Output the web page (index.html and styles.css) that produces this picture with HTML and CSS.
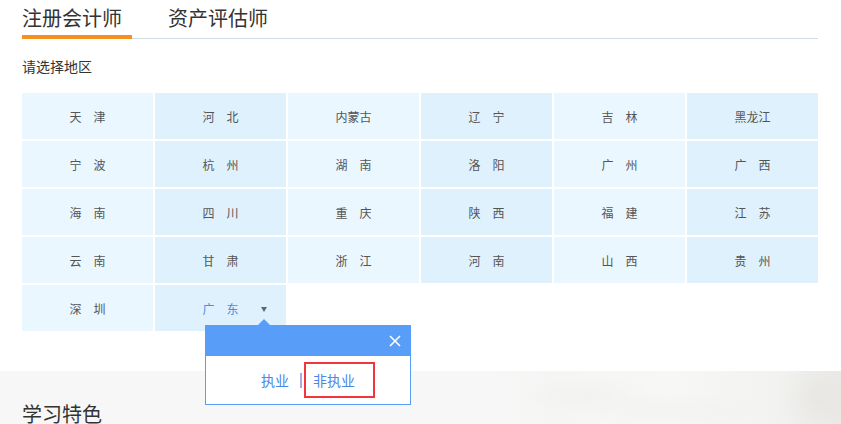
FILE: index.html
```html
<!DOCTYPE html>
<html lang="zh-CN">
<head>
<meta charset="utf-8">
<title>选择地区</title>
<link rel="stylesheet" href="styles.css">
</head>
<body>
<div class="main">
  <div class="tabs">
    <div class="tab active">注册会计师</div>
    <div class="tab">资产评估师</div>
  </div>
  <div class="title">请选择地区</div>
  <div class="grid">
    <div class="cell">天　津</div>
    <div class="cell">河　北</div>
    <div class="cell">内蒙古</div>
    <div class="cell">辽　宁</div>
    <div class="cell">吉　林</div>
    <div class="cell">黑龙江</div>
    <div class="cell">宁　波</div>
    <div class="cell">杭　州</div>
    <div class="cell">湖　南</div>
    <div class="cell">洛　阳</div>
    <div class="cell">广　州</div>
    <div class="cell">广　西</div>
    <div class="cell">海　南</div>
    <div class="cell">四　川</div>
    <div class="cell">重　庆</div>
    <div class="cell">陕　西</div>
    <div class="cell">福　建</div>
    <div class="cell">江　苏</div>
    <div class="cell">云　南</div>
    <div class="cell">甘　肃</div>
    <div class="cell">浙　江</div>
    <div class="cell">河　南</div>
    <div class="cell">山　西</div>
    <div class="cell">贵　州</div>
    <div class="cell">深　圳</div>
    <div class="cell open">广　东<span class="drop"></span>
      <div class="popup">
        <div class="popup-head">
          <svg class="close" width="12" height="12" viewBox="0 0 12 12"><path d="M1 1 L11 11 M11 1 L1 11" stroke="#fff" stroke-width="1.6" fill="none"/></svg>
        </div>
        <div class="popup-body">
          <a class="opt">执业</a><span class="sep"></span><a class="opt marked">非执业</a>
        </div>
      </div>
    </div>
  </div>
</div>
<div class="feature">
  <h2 class="feature-title">学习特色</h2>
</div>
</body>
</html>
```
FILE: styles.css
```css
html, body {
  margin: 0;
  padding: 0;
  background: #fff;
  font-family: "Noto Sans CJK SC", "Noto Sans", sans-serif;
  color: #333;
}
.main {
  padding: 0 23px 0 22px;
}
.tabs {
  display: flex;
  height: 38px;
  border-bottom: 1px solid #d3d9e5;
}
.tab {
  font-size: 20px;
  line-height: 35px;
  color: #333;
  white-space: nowrap;
}
.tab.active {
  width: 110px;
  border-bottom: 4px solid #f6901e;
  margin-bottom: -1px;
}
.tab + .tab {
  margin-left: 36px;
}
.title {
  margin-top: 17px;
  font-size: 14px;
  line-height: 20px;
  color: #333;
}
.grid {
  margin-top: 17px;
  display: grid;
  grid-template-columns: repeat(6, 131px);
  grid-auto-rows: 46px;
  gap: 2px;
}
.cell {
  display: flex;
  align-items: center;
  justify-content: center;
  font-size: 12px;
  color: #555;
  background: #ebf7fe;
  position: relative;
}
.cell:nth-child(even) {
  background: #dff1fd;
}
.cell.open {
  color: #4a8de6;
}
.drop {
  position: absolute;
  left: 106px;
  top: 22px;
  width: 0;
  height: 0;
  border-top: 5px solid #666;
  border-left: 3.5px solid transparent;
  border-right: 3.5px solid transparent;
}
.popup {
  position: absolute;
  left: 50px;
  top: 40px;
  width: 204px;
  border: 1px solid #589df7;
  background: #fff;
  z-index: 5;
}
.popup::before {
  content: "";
  position: absolute;
  top: -7px;
  left: 52px;
  border-bottom: 6px solid #589df7;
  border-left: 6px solid transparent;
  border-right: 6px solid transparent;
}
.popup-head {
  height: 30px;
  background: #589df7;
  display: flex;
  align-items: center;
  justify-content: flex-end;
  padding-right: 9px;
}
.close {
  display: block;
}
.popup-body {
  height: 48px;
  display: flex;
  align-items: center;
  justify-content: center;
  font-size: 14px;
  line-height: 20px;
}
.opt {
  color: #4a86e8;
  cursor: pointer;
}
.sep {
  display: inline-block;
  width: 2px;
  height: 15px;
  background: #aaa6ea;
  margin: 0 11px 0 11px;
}
.marked {
  position: relative;
}
.marked::after {
  content: "";
  position: absolute;
  left: -9px;
  right: -20px;
  top: -8px;
  bottom: -8px;
  border: 2px solid #f2363a;
}
.feature {
  margin-top: 40px;
  height: 53px;
  overflow: hidden;
  background:
    radial-gradient(ellipse 70px 20px at 70% 45%, rgba(0,0,0,0.015), transparent),
    radial-gradient(ellipse 90px 20px at 80% 75%, rgba(0,0,0,0.015), transparent),
    radial-gradient(ellipse 40px 40px at 97% 50%, rgba(120,110,90,0.05), transparent),
    linear-gradient(to right, #f7f7f7 58%, #f5f5f4 66%, #f7f7f6 80%, #f1f1ef 94%, #ebeae7 100%);
  padding: 28px 22px 0;
  box-sizing: border-box;
}
.feature-title {
  margin: 0;
  font-size: 20px;
  font-weight: normal;
  line-height: 30px;
  color: #333;
}
```
